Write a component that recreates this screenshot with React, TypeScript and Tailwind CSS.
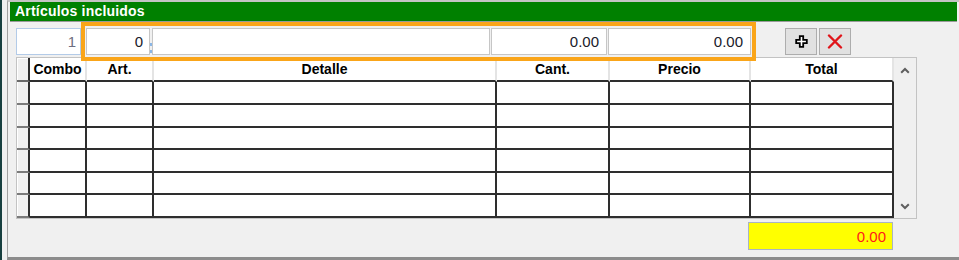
import React from "react";

const cols = [
  { w: "w-[57px]", label: "Combo" },
  { w: "w-[67px]", label: "Art." },
  { w: "w-[343px]", label: "Detalle" },
  { w: "w-[113px]", label: "Cant." },
  { w: "w-[141px]", label: "Precio" },
  { w: "w-[143px]", label: "Total" },
];

const rowHeights = ["h-[23px]", "h-[23px]", "h-[22px]", "h-[23px]", "h-[22px]", "h-[23px]"];

function Chevron({ up }: { up: boolean }) {
  return (
    <svg width="10" height="7" viewBox="0 0 10 7">
      <path
        d={up ? "M1.2 5.8 L5 2 L8.8 5.8" : "M1.2 1.2 L5 5 L8.8 1.2"}
        fill="none"
        stroke="#5f5f5f"
        strokeWidth="2"
      />
    </svg>
  );
}

export default function App() {
  return (
    <div className="w-[959px] h-[260px] bg-[#f0f0f0] flex overflow-hidden font-['Liberation_Sans',Arial,sans-serif]">
      <div className="w-[2px] bg-[#173f3f]" />
      <div className="w-[5px]" />
      <div className="relative flex-1 flex flex-col border-l border-l-[#a0a0a0] border-t-2 border-t-[#c4c4c4] border-b-[3px] border-b-[#8c8c8c]">
        {/* Title bar */}
        <div className="mx-[2px] h-[20px] bg-[#008000] border-b border-b-[#9a9a9a] text-white font-bold text-[14px] leading-[19px] pl-[5px] tracking-[0.2px]">
          Artículos incluidos
        </div>

        {/* Input row */}
        <div className="flex items-start mt-[6px] ml-[8px] h-[27px] text-[15px] leading-none">
          <div className="w-[65px] h-[27px] bg-white border border-[#b3cbe8] flex items-center justify-end pr-[4px] text-[#6e6e80]">
            1
          </div>
          <div className="ml-[5px] w-[64px] h-[27px] bg-white border border-[#c6c6c6] flex items-center justify-end pr-[6px] text-[#20202a]">
            0
          </div>
          <div className="w-[2px] h-[27px] flex flex-col items-start pt-[15px] gap-[4px]">
            <div className="w-[2px] h-[3px] bg-[#8ab6e6]" />
            <div className="w-[2px] h-[3px] bg-[#8ab6e6]" />
          </div>
          <div className="w-[338px] h-[27px] bg-white border border-[#c6c6c6]" />
          <div className="ml-[1px] w-[116px] h-[27px] bg-white border border-[#c6c6c6] flex items-center justify-end pr-[7px] text-[#20202a]">
            0.00
          </div>
          <div className="ml-[1px] w-[143px] h-[27px] bg-white border border-[#c6c6c6] flex items-center justify-end pr-[7px] text-[#20202a]">
            0.00
          </div>
          <button className="ml-[34px] w-[32px] h-[27px] bg-[#e1e1e1] border border-[#adadad] flex items-center justify-center">
            <svg width="13" height="13" viewBox="0 0 13 13">
              <path
                d="M4.8 1.2 H8.2 V4.8 H11.8 V8.2 H8.2 V11.8 H4.8 V8.2 H1.2 V4.8 H4.8 Z"
                fill="#ffffff"
                stroke="#000000"
                strokeWidth="1.8"
                strokeLinejoin="miter"
              />
            </svg>
          </button>
          <button className="ml-[2px] w-[32px] h-[27px] bg-[#e1e1e1] border border-[#adadad] flex items-center justify-center">
            <svg width="16" height="15" viewBox="0 0 16 15">
              <path d="M2 1.5 L14 13.5 M14 1.5 L2 13.5" stroke="#e0141a" strokeWidth="2.4" strokeLinecap="round" fill="none" />
            </svg>
          </button>
        </div>

        {/* Grid */}
        <div className="mt-[2px] ml-[8px] w-[901px] h-[162px] border border-[#c3c3c3] flex bg-[#f0f0f0]">
          <div className="w-[877px] flex flex-col">
            {/* Header */}
            <div className="flex h-[24px]">
              <div className="w-[13px] h-[24px] bg-[#f0f0f0] border-r-2 border-r-[#2e2e2e] border-b-2 border-b-[#6a6a6a] shadow-[inset_1px_1px_0_#ffffff]" />
              {cols.map((c) => (
                <div
                  key={c.label}
                  className={`${c.w} h-[24px] bg-white border-r-2 border-r-[#e4e4e4] border-b-2 border-b-[#2e2e2e] flex items-center justify-center font-bold text-[14px] text-black leading-none pb-[1px]`}
                >
                  {c.label}
                </div>
              ))}
            </div>
            {/* Rows */}
            {rowHeights.map((h, i) => (
              <div key={i} className={`flex ${h}`}>
                <div className="w-[13px] h-full bg-[#f0f0f0] border-r-2 border-r-[#2e2e2e] border-b-2 border-b-[#7a7a7a] shadow-[inset_1px_0_0_#ffffff]" />
                {cols.map((c) => (
                  <div
                    key={c.label}
                    className={`${c.w} h-full bg-white border-r-2 border-r-[#2e2e2e] border-b-2 border-b-[#2e2e2e]`}
                  />
                ))}
              </div>
            ))}
          </div>
          {/* Scrollbar */}
          <div className="w-[22px] flex flex-col justify-between bg-[#f0f0f0]">
            <div className="h-[24px] flex items-center justify-center">
              <Chevron up={true} />
            </div>
            <div className="h-[24px] flex items-center justify-center">
              <Chevron up={false} />
            </div>
          </div>
        </div>

        {/* Total */}
        <div className="mt-[3px] ml-[740px] w-[145px] h-[28px] bg-[#ffff00] border border-[#a9b4c4] flex items-center justify-end pr-[6px] text-[15px] leading-none text-[#ff1a1a]">
          0.00
        </div>

        {/* Orange highlight overlay */}
        <div className="absolute left-[73px] top-[20px] w-[675px] h-[39px] border-4 border-[#faa519] pointer-events-none" />
      </div>
    </div>
  );
}
